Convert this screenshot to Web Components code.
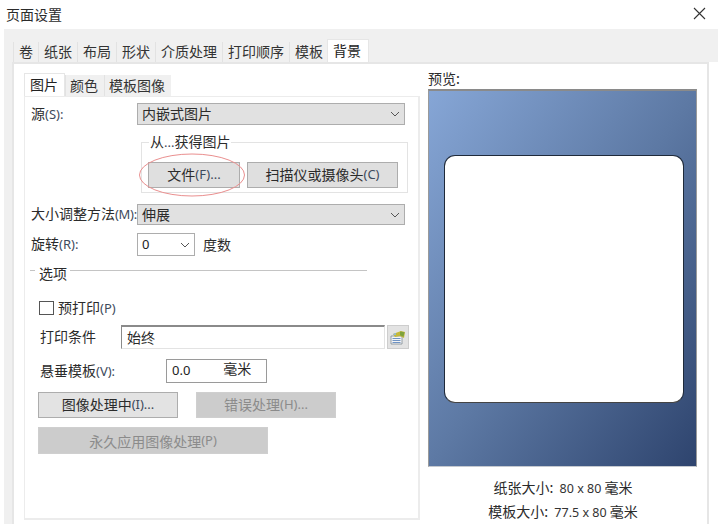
<!DOCTYPE html>
<html lang="zh">
<head>
<meta charset="utf-8">
<title>页面设置</title>
<style>
  html, body { margin: 0; background: #fff; }
  body { font: 14px/1 "Noto Sans CJK SC", "Noto Sans", sans-serif; color: #2b2b2b; }
  .l { font: 13px/1 "Noto Sans", "Noto Sans CJK SC", sans-serif; color: #3d4a5c; }
  .num { font: 12.5px/1 "Noto Sans", "Noto Sans CJK SC", sans-serif; color: #333; margin-left: 3px; }
</style>
</head>
<body>
<page-dialog>
  <span slot="title">页面设置</span>
  <tab-strip slot="tabs" style="--sel-ml:-1px">
    <tab-item>卷</tab-item><tab-item>纸张</tab-item><tab-item>布局</tab-item><tab-item>形状</tab-item><tab-item>介质处理</tab-item><tab-item>打印顺序</tab-item><tab-item>模板</tab-item><tab-item selected>背景</tab-item>
  </tab-strip>

  <form-pane>
    <tab-strip slot="tabs" style="--pad-l:4px;--pad-r:6px;--item-h:21px;--sel-r:6px">
      <tab-item selected>图片</tab-item><tab-item>颜色</tab-item><tab-item>模板图像</tab-item>
    </tab-strip>

    <form-row style="--top:6px;--h:22px">
      <span>源<span class="l">(S):</span></span>
      <combo-box slot="field" style="width:268px">内嵌式图片</combo-box>
    </form-row>

    <source-group>
      <span slot="legend">从<span class="l">...</span>获得图片</span>
      <push-button style="width:92px">文件<span class="l">(F)...</span></push-button>
      <push-button style="width:151px">扫描仪或摄像头<span class="l">(C)</span></push-button>
    </source-group>

    <form-row style="--top:11px;--h:21px">
      <span>大小调整方法<span class="l" style="letter-spacing:-.3px">(M):</span></span>
      <combo-box slot="field" style="width:268px">伸展</combo-box>
    </form-row>

    <form-row style="--top:8px;--h:23px">
      <span>旋转<span class="l">(R):</span></span>
      <combo-box slot="field" plain style="width:58px"><span class="l" style="color:#222">0</span></combo-box>
      <span slot="field" style="margin-left:6px;padding-bottom:2px">度数</span>
    </form-row>

    <rule-legend>选项</rule-legend>

    <check-box>预打印<span class="l">(P)</span></check-box>

    <form-row style="--top:9px;--h:24px;--indent:9px;--label:81px">
      <span>打印条件</span>
      <text-box slot="field" style="width:264px">始终</text-box>
      <icon-button slot="field"></icon-button>
    </form-row>

    <form-row style="--top:10px;--h:24px;--indent:9px;--label:126px">
      <span>悬垂模板<span class="l">(V):</span></span>
      <text-box slot="field" flat style="width:101px"><span class="l" style="color:#222">0.0</span><span style="margin-left:33px;position:relative;top:-2px">毫米</span></text-box>
    </form-row>

    <button-row style="--top:9px">
      <push-button light style="width:140px;height:26px">图像处理中<span class="l">(I)...</span></push-button>
      <push-button disabled style="width:140px;height:26px;margin-left:18px">错误处理<span class="l" style="color:inherit">(H)...</span></push-button>
    </button-row>
    <button-row style="--top:9px">
      <push-button disabled style="width:230px;height:27px;padding-bottom:0">永久应用图像处理<span class="l" style="color:inherit">(P)</span></push-button>
    </button-row>
  </form-pane>

  <preview-pane slot="side">
    <span slot="label">预览:</span>
    <span slot="paper">纸张大小: <span class="num">80 x 80</span> 毫米</span>
    <span slot="template">模板大小: <span class="num">77.5 x 80</span> 毫米</span>
  </preview-pane>
</page-dialog>

<template id="page-dialog">
  <style>
    :host { display: flex; flex-direction: column; width: 718px; height: 531px; overflow: hidden; }
    .titlebar { display: flex; align-items: center; justify-content: space-between; box-sizing: border-box; height: 29px; padding: 0 12px 2px 6px; flex: none; }
    .tabs { display: flex; align-items: flex-end; height: 33px; margin-left: 4px; padding-left: 9px; background: #f0f0f0; flex: none; }
    .row { display: flex; height: 462px; margin-left: 4px; flex: none; }
    .gutter { width: 8px; background: #f0f0f0; }
    .sheet { display: flex; width: 697px; box-sizing: border-box; padding: 9px 0 5px 10px; border: 2px solid #e6e6e6; border-bottom: 0; background: #fff; }
  </style>
  <div class="titlebar"><slot name="title"></slot>
    <svg width="13" height="13" viewBox="0 0 13 13"><path d="M1 1l11 11M12 1L1 12" fill="none" stroke="#333" stroke-width="1.1"/></svg>
  </div>
  <div class="tabs"><slot name="tabs"></slot></div>
  <div class="row">
    <div class="gutter"></div>
    <div class="sheet"><slot></slot><slot name="side"></slot></div>
  </div>
</template>

<template id="tab-strip">
  <style>
    :host { display: flex; align-items: flex-end; }
  </style>
  <slot></slot>
</template>

<template id="tab-item">
  <style>
    :host { display: flex; align-items: center; box-sizing: border-box; height: var(--item-h, 20px); padding: 0 var(--pad-r, 5px) 2px var(--pad-l, 5px); background: #f0f0f0; border-left: 1px solid #e2e2e2; color: #333; white-space: nowrap; }
    :host([selected]) { height: 23px; margin-left: var(--sel-ml, 0); padding: 0 var(--sel-r, 7px) 2px 5px; background: #fff; border: 1px solid #e6e6e6; border-bottom: 0; color: #222; }
  </style>
  <slot></slot>
</template>

<template id="form-pane">
  <style>
    :host { display: flex; flex-direction: column; width: 396px; height: 447px; flex: none; }
    .body { flex: 1; box-sizing: border-box; padding: 0 0 0 6px; border: 2px solid #ececec; border-top-width: 1px; border-left-width: 1px; background: #fff; }
  </style>
  <slot name="tabs"></slot>
  <div class="body"><slot></slot></div>
</template>

<template id="form-row">
  <style>
    :host { display: flex; align-items: center; height: var(--h, 22px); margin-top: var(--top, 0); padding-left: var(--indent, 0); }
    .label { width: var(--label, 106px); flex: none; white-space: nowrap; padding-bottom: 2px; }
    .field { display: flex; align-items: center; gap: 2px; height: 100%; }
  </style>
  <div class="label"><slot></slot></div>
  <div class="field"><slot name="field"></slot></div>
</template>

<template id="combo-box">
  <style>
    :host { display: flex; align-items: center; justify-content: space-between; box-sizing: border-box; height: 100%; padding: 0 4px 0 4px; background: #e1e1e1; border: 1px solid #adadad; }
    :host([plain]) { background: #fff; }
    span { padding-bottom: 2px; }
    svg { flex: none; }
  </style>
  <span><slot></slot></span>
  <svg width="10" height="6" viewBox="0 0 10 6"><path d="M1 1l4 4 4-4" fill="none" stroke="#555" stroke-width="1"/></svg>
</template>

<template id="source-group">
  <style>
    :host { display: block; position: relative; box-sizing: border-box; width: 267px; height: 51px; margin: 17px 0 0 110px; padding: 19px 0 0 6px; border: 1px solid #e3e3e3; }
    .legend { position: absolute; top: -10px; left: 7px; padding: 0 1px; background: #fff; line-height: 16px; }
    .buttons { display: flex; gap: 7px; height: 26px; }
    svg { position: absolute; left: -4px; top: 10px; pointer-events: none; }
  </style>
  <span class="legend"><slot name="legend"></slot></span>
  <div class="buttons"><slot></slot></div>
  <svg width="108" height="44" viewBox="0 0 108 44"><ellipse cx="54" cy="22" rx="52.5" ry="21" fill="none" stroke="#ea8f8f" stroke-width="1"/></svg>
</template>

<template id="push-button">
  <style>
    :host { display: flex; align-items: center; justify-content: center; box-sizing: border-box; height: 100%; padding-bottom: 2px; background: #dfdfdf; border: 1px solid #adadad; white-space: nowrap; }
    :host([light]) { background: #e3e3e3; }
    :host([disabled]) { background: #cccccc; border-color: #cfcfcf; color: #8b8b8b; }
  </style>
  <slot></slot>
</template>

<template id="rule-legend">
  <style>
    :host { display: flex; align-items: center; height: 16px; margin-top: 10px; width: 337px; margin-left: -1px; }
    .tick { width: 5px; height: 1px; background: #c4c4c4; position: relative; top: -4px; }
    .line { flex: 1; height: 1px; background: #c4c4c4; position: relative; top: -4px; }
    span { padding: 0 3px 2px 4px; }
  </style>
  <div class="tick"></div><span><slot></slot></span><div class="line"></div>
</template>

<template id="check-box">
  <style>
    :host { display: flex; align-items: center; gap: 4px; height: 16px; margin: 18px 0 0 8px; }
    .box { box-sizing: border-box; width: 15px; height: 14px; border: 1px solid #555; background: #fff; }
    span { padding-bottom: 2px; }
  </style>
  <div class="box"></div><span><slot></slot></span>
</template>

<template id="text-box">
  <style>
    :host { display: flex; align-items: center; box-sizing: border-box; height: 24px; padding: 0 5px 2px; background: #fff; border: 1px solid #e3e3e3; border-top: 2px solid #8a8a8a; border-left: 1px solid #8a8a8a; }
    :host([flat]) { border: 1px solid #9a9a9a; }
  </style>
  <slot></slot>
</template>

<template id="icon-button">
  <style>
    :host { display: flex; align-items: center; justify-content: center; box-sizing: border-box; width: 22px; height: 24px; background: #e3e3e3; border: 1px solid #cdcdcd; }
  </style>
  <svg width="16" height="15" viewBox="0 0 16 15">
    <path d="M1 6h11v8H1z" fill="#f4f4f4" stroke="#7d8a94" stroke-width=".8"/>
    <path d="M2.5 8.5h8M2.5 10.5h8M2.5 12.5h8" stroke="#6f93c4" stroke-width="1"/>
    <path d="M3 4l8-3 4 1-1 6-4-2-5 1z" fill="#c4b93a"/>
    <path d="M10 1.5l4.5 .7-1 4.5-3.5-1.5z" fill="#7fa23c"/>
    <path d="M3 4l3-1 0 2-2 0z" fill="#8fb8d8"/>
  </svg>
</template>

<template id="button-row">
  <style>
    :host { display: flex; margin: var(--top, 0) 0 0 7px; }
  </style>
  <slot></slot>
</template>

<template id="preview-pane">
  <style>
    :host { display: flex; flex-direction: column; width: 269px; margin: -1px 0 0 8px; flex: none; }
    .label { height: 17px; line-height: 12px; }
    .paper { display: flex; align-items: center; justify-content: center; box-sizing: border-box; height: 378px; padding: 1px 0 0 3px; border: 1px solid #9a9a9a; border-top: 2px solid #8a8a8a; border-bottom-color: #c5c9cf;
      background: linear-gradient(to bottom right, #86a6d6 0%, #5d79a4 50%, #2e446e 100%); }
    .sheet { width: 240px; height: 248px; box-sizing: border-box; background: #fff; border: 1px solid #1f2a3a; border-bottom-color: #444; border-radius: 11px; }
    .caption { display: flex; flex-direction: column; align-items: center; gap: 8px; margin-top: 13px; padding-left: 1px; }
    .caption div { line-height: 14px; white-space: nowrap; }
  </style>
  <div class="label"><slot name="label"></slot></div>
  <div class="paper"><div class="sheet"></div></div>
  <div class="caption">
    <div><slot name="paper"></slot></div>
    <div><slot name="template"></slot></div>
  </div>
</template>

<script>
  class TemplateElement extends HTMLElement {
    constructor() {
      super();
      const tpl = document.getElementById(this.localName);
      this.attachShadow({ mode: 'open' }).appendChild(tpl.content.cloneNode(true));
    }
  }

  const names = ['page-dialog', 'tab-strip', 'tab-item', 'form-pane', 'form-row', 'combo-box',
    'source-group', 'push-button', 'rule-legend', 'check-box', 'text-box', 'icon-button',
    'button-row', 'preview-pane'];
  names.forEach((name) => {
    window.customElements.define(name, class extends TemplateElement {});
  });
</script>
</body>
</html>
